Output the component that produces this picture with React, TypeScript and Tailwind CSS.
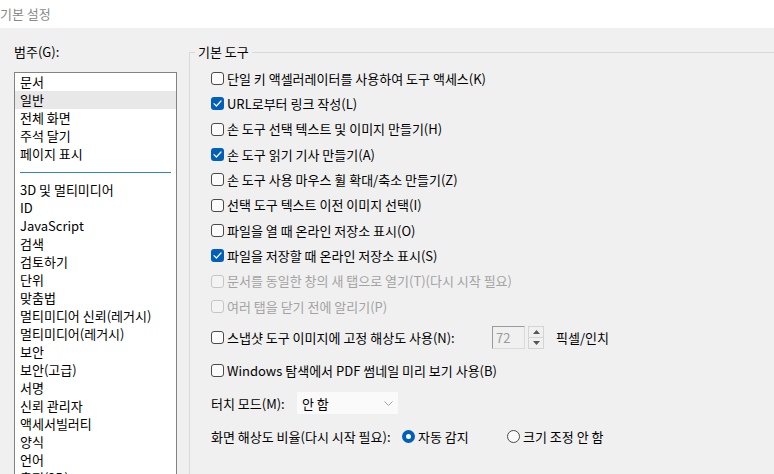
import React from 'react';

const categoriesTop = ['문서', '일반', '전체 화면', '주석 달기', '페이지 표시'];
const categoriesBottom = [
  '3D 및 멀티미디어',
  'ID',
  'JavaScript',
  '검색',
  '검토하기',
  '단위',
  '맞춤법',
  '멀티미디어 신뢰(레거시)',
  '멀티미디어(레거시)',
  '보안',
  '보안(고급)',
  '서명',
  '신뢰 관리자',
  '액세서빌러티',
  '양식',
  '언어',
  '측정(2D)',
];

const options = [
  { label: '단일 키 액셀러레이터를 사용하여 도구 액세스(K)', checked: false },
  { label: 'URL로부터 링크 작성(L)', checked: true },
  { label: '손 도구 선택 텍스트 및 이미지 만들기(H)', checked: false },
  { label: '손 도구 읽기 기사 만들기(A)', checked: true },
  { label: '손 도구 사용 마우스 휠 확대/축소 만들기(Z)', checked: false },
  { label: '선택 도구 텍스트 이전 이미지 선택(I)', checked: false },
  { label: '파일을 열 때 온라인 저장소 표시(O)', checked: false },
  { label: '파일을 저장할 때 온라인 저장소 표시(S)', checked: true },
  { label: '문서를 동일한 창의 새 탭으로 열기(T)(다시 시작 필요)', checked: false, disabled: true },
  { label: '여러 탭을 닫기 전에 알리기(P)', checked: false, disabled: true },
];

function Checkbox({ checked, disabled }: { checked?: boolean; disabled?: boolean }) {
  if (checked) {
    return (
      <span className="flex h-[13px] w-[13px] shrink-0 items-center justify-center rounded-[3px] bg-[#005fb8]">
        <svg width="9" height="7" viewBox="0 0 9 7" fill="none">
          <path d="M1 3.6 L3.4 6 L8 1" stroke="white" strokeWidth="1.2" strokeLinecap="round" strokeLinejoin="round" />
        </svg>
      </span>
    );
  }
  return (
    <span
      className={`h-[13px] w-[13px] shrink-0 rounded-[3px] border ${
        disabled ? 'border-[#c6c6c6] bg-[#f3f3f3]' : 'border-[#4a4a4a] bg-[#fbfbfb]'
      }`}
    />
  );
}

function Radio({ checked }: { checked?: boolean }) {
  if (checked) {
    return (
      <span className="flex h-[13px] w-[13px] shrink-0 items-center justify-center rounded-full bg-[#005fb8]">
        <span className="h-[5px] w-[5px] rounded-full bg-white" />
      </span>
    );
  }
  return <span className="h-[13px] w-[13px] shrink-0 rounded-full border border-[#4a4a4a] bg-[#fbfbfb]" />;
}

export default function App() {
  return (
    <div
      className="flex h-[474px] w-[774px] flex-col overflow-hidden bg-[#f0f0f0] text-[13px] text-black"
      style={{ fontFamily: '"Noto Sans CJK KR", "Noto Sans", sans-serif' }}
    >
      {/* title bar */}
      <div className="flex h-[28px] shrink-0 items-center bg-white text-[13px] text-[#8a8a8a]">
        기본 설정
      </div>

      <div className="flex flex-1">
        {/* categories */}
        <div className="flex w-[177px] shrink-0 flex-col pl-[14px] pt-[16px]">
          <div className="flex h-[16px] items-center">범주(G):</div>
          <div className="mt-[12px] h-[430px] border border-[#838383] bg-white">
            {categoriesTop.map((c) => (
              <div
                key={c}
                className={`flex h-[18px] items-center pl-[5px] ${c === '일반' ? 'bg-[#e8e8e8]' : ''}`}
              >
                {c}
              </div>
            ))}
            <div className="flex h-[18px] items-center px-[5px]">
              <div className="h-px w-full bg-[#2f86c3]" />
            </div>
            {categoriesBottom.map((c) => (
              <div key={c} className="flex h-[18px] items-center pl-[5px]">
                {c}
              </div>
            ))}
          </div>
        </div>

        {/* group box */}
        <fieldset className="ml-[12px] mt-[16px] h-[460px] w-[640px] shrink-0 border border-[#d9d9d9] p-0">
          <legend className="ml-[5px] px-[3px] text-[13px] leading-[16px]">기본 도구</legend>
          <div className="flex flex-col pl-[21px] pt-[6px]">
            {options.map((o) => (
              <div key={o.label} className="flex h-[25.3px] items-center gap-[3px]">
                <Checkbox checked={o.checked} disabled={o.disabled} />
                <span className={o.disabled ? 'text-[#a3a3a3]' : ''}>{o.label}</span>
              </div>
            ))}

            <div className="mt-[2px] flex h-[33px] items-center">
              <div className="flex w-[281px] items-center gap-[3px]">
                <Checkbox />
                <span>스냅샷 도구 이미지에 고정 해상도 사용(N):</span>
              </div>
              <div className="flex h-[23px] w-[33px] items-center border border-t-[#9a9a9a] border-l-[#9a9a9a] border-b-[#dadada] border-r-[#dadada] pl-[3px] text-[#9a9a9a]">
                72
              </div>
              <div className="ml-[3px] flex h-[23px] w-[16px] flex-col border border-[#d4d4d4]">
                <div className="flex flex-1 items-center justify-center border-b border-[#d4d4d4]">
                  <svg width="7" height="4" viewBox="0 0 7 4">
                    <path d="M0 4 L3.5 0 L7 4 Z" fill="#555" />
                  </svg>
                </div>
                <div className="flex flex-1 items-center justify-center">
                  <svg width="7" height="4" viewBox="0 0 7 4">
                    <path d="M0 0 L3.5 4 L7 0 Z" fill="#555" />
                  </svg>
                </div>
              </div>
              <span className="ml-[12px]">픽셀/인치</span>
            </div>

            <div className="flex h-[33px] items-center gap-[3px]">
              <Checkbox />
              <span>Windows 탐색에서 PDF 썸네일 미리 보기 사용(B)</span>
            </div>

            <div className="flex h-[33px] items-center">
              <span className="w-[86px]">터치 모드(M):</span>
              <div className="flex h-[22px] w-[101px] items-center justify-between bg-[#fafafa] pl-[5px] pr-[5px]">
                <span>안 함</span>
                <svg width="9" height="5" viewBox="0 0 9 5" fill="none">
                  <path d="M0.5 0.5 L4.5 4.5 L8.5 0.5" stroke="#a0a0a0" strokeWidth="1" />
                </svg>
              </div>
            </div>

            <div className="flex h-[33px] items-center">
              <span className="w-[191px]">화면 해상도 비율(다시 시작 필요):</span>
              <div className="flex w-[105px] items-center gap-[3px]">
                <Radio checked />
                <span>자동 감지</span>
              </div>
              <div className="flex items-center gap-[3px]">
                <Radio />
                <span>크기 조정 안 함</span>
              </div>
            </div>
          </div>
        </fieldset>
      </div>
    </div>
  );
}
